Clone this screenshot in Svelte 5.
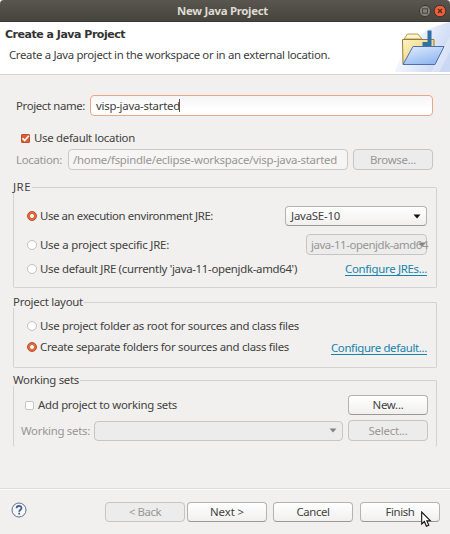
<script>
  // Spreads a label's letters so that it takes exactly w pixels.
  function fit(node, w) {
    node.style.letterSpacing = '0px';
    const natural = node.getBoundingClientRect().width;
    const n = node.textContent.length;
    node.style.letterSpacing = (w - natural) / n + 'px';
  }

  let project = 'visp-java-started';
</script>

{#snippet label(text, w)}<span class="t" use:fit={w}>{text}</span>{/snippet}
{#snippet arrow()}<svg class="arrow" width="8" height="5" viewBox="0 0 8 5"><path d="M0.5 .5h7L4 4.5z" fill="currentColor" /></svg>{/snippet}

<div class="window">
  <div class="titlebar">
    <b>{@render label('New Java Project', 91)}</b>
    <svg class="controls" width="28" height="14" viewBox="0 0 28 14">
      <circle cx="7" cy="7" r="5.6" fill="#83817a" stroke="#393832" />
      <rect x="4.5" y="4.8" width="5" height="4.4" fill="none" stroke="#45443f" />
      <circle cx="22" cy="7" r="5.8" fill="#ed6039" stroke="#45302a" />
      <path d="M20 5l4 4M24 5l-4 4" stroke="#51291d" stroke-width="1.2" />
    </svg>
  </div>

  <header>
    <h1>{@render label('Create a Java Project', 120)}</h1>
    <p>{@render label('Create a Java project in the workspace or in an external location.', 321)}</p>
    <svg class="banner" width="56" height="50" viewBox="0 0 56 50">
      <defs>
        <linearGradient id="glow" x1="0" y1="0" x2="1" y2=".5"><stop offset=".2" stop-color="#fff" /><stop offset="1" stop-color="#cbd8f3" /></linearGradient>
        <linearGradient id="front" x1="0" y1="0" x2=".6" y2="1"><stop offset="0" stop-color="#e2eefe" /><stop offset="1" stop-color="#93b8ee" /></linearGradient>
        <linearGradient id="back" x1="0" y1="0" x2="1" y2="1"><stop offset="0" stop-color="#fff3c0" /><stop offset="1" stop-color="#e8c668" /></linearGradient>
      </defs>
      <path d="M1 50C8 25 25 7 56 0V50z" fill="url(#glow)" />
      <path d="M37 50L56 14V30L45 50z" fill="#fff" opacity=".3" />
      <path d="M10 17l3.500-5H24l4 5z" fill="#fff5ca" stroke="#b39b58" />
      <path d="M8.500 17.500H40V40L9 42z" fill="url(#back)" stroke="#967a38" />
      <path d="M33.500 8.500h4v15.500H28.500v-4h5z" fill="#2e71a4" />
      <path d="M19 24.500H50L41 42.500H9z" fill="url(#front)" stroke="#4b70ad" />
    </svg>
  </header>

  <main>
    <div class="row name">
      {@render label('Project name:', 69)}
      <div class="field focus">{@render label(project, 84)}<i class="caret"></i></div>
    </div>
    <div class="row default">
      <span class="check on"><svg width="9" height="9" viewBox="0 0 9 9"><path d="M1.500 4.300l2.200 2.300L7.800 1.800" fill="none" stroke="#fff" stroke-width="1.600" /></svg></span>
      {@render label('Use default location', 101)}
    </div>
    <div class="row location off">
      {@render label('Location:', 46)}
      <div class="field">{@render label('/home/fspindle/eclipse-workspace/visp-java-started', 264)}</div>
      <div class="btn">{@render label('Browse...', 46)}</div>
    </div>

    <section class="jre">
      <div class="legend">{@render label('JRE', 18)}<i></i></div>
      <div class="box">
        <div class="row r1"><span class="radio on"></span>{@render label('Use an execution environment JRE:', 173)}
          <div class="btn combo push wide">{@render label('JavaSE-10', 49)}{@render arrow()}</div></div>
        <div class="row r2"><span class="radio"></span>{@render label('Use a project specific JRE:', 129)}
          <div class="btn combo push off narrow">{@render label('java-11-openjdk-amd64', 117)}{@render arrow()}</div></div>
        <div class="row r3"><span class="radio"></span>{@render label("Use default JRE (currently 'java-11-openjdk-amd64')", 257)}
          <span class="link push">{@render label('Configure JREs...', 82)}</span></div>
      </div>
    </section>

    <section class="layout">
      <div class="legend">{@render label('Project layout', 70)}<i></i></div>
      <div class="box">
        <div class="row r4"><span class="radio"></span>{@render label('Use project folder as root for sources and class files', 259)}</div>
        <div class="row r5"><span class="radio on"></span>{@render label('Create separate folders for sources and class files', 249)}
          <span class="link push low">{@render label('Configure default...', 96)}</span></div>
      </div>
    </section>

    <section class="sets">
      <div class="legend">{@render label('Working sets', 66)}<i></i></div>
      <div class="box open">
        <div class="row r6"><span class="check"></span>{@render label('Add project to working sets', 139)}
          <div class="btn push">{@render label('New...', 31)}</div></div>
        <div class="row r7 off">{@render label('Working sets:', 69)}
          <div class="btn combo sets-combo">{@render arrow()}</div>
          <div class="btn">{@render label('Select...', 39)}</div></div>
      </div>
    </section>
  </main>

  <footer>
    <svg class="help" width="16" height="16" viewBox="0 0 16 16">
      <circle cx="8" cy="8" r="7" fill="#f6f7f9" stroke="#5d6f91" />
      <path d="M5.600 6.200C5.600 3.300 10.500 3.300 10.500 6.100C10.500 7.700 8.200 7.800 8.200 9.700M8.200 10.800V12.500" fill="none" stroke="#48608a" stroke-width="1.800" />
    </svg>
    <div class="btn off">{@render label('< Back', 32)}</div>
    <div class="btn next">{@render label('Next >', 34)}</div>
    <div class="btn cancel">{@render label('Cancel', 33)}</div>
    <div class="btn finish">{@render label('Finish', 29)}</div>
  </footer>

  <svg class="cursor" width="11" height="17" viewBox="0 0 11 17">
    <path d="M.700 1v12l2.700-2.500 2 4.800 2.400-1-2-4.600H9.300z" fill="#fff" stroke="#111" stroke-width="1.100" />
  </svg>
</div>

<style>
  :global(body) { background: #f1f0ee; overflow: hidden; }
  .window {
    position: relative; width: 450px; height: 534px; overflow: hidden;
    display: flex; flex-direction: column; box-sizing: border-box;
    background: #f1f0ee; color: #424240;
    font: 11.4px/14px "Noto Sans", "Open Sans", sans-serif;
  }
  .window :global(*) { box-sizing: border-box; }
  .t { white-space: pre; flex: none; display: inline-block; }
  svg { display: block; flex: none; }

  .titlebar {
    height: 22px; flex: none; display: flex; align-items: center;
    padding: 0 4px 0 177px; justify-content: space-between;
    background: linear-gradient(#59564f, #45443d); border-bottom: 1px solid #3a3934;
    border-radius: 4px 4px 0 0; color: #dfdbd2;
  }
  .titlebar b { font-weight: 700; }

  header {
    position: relative; height: 53px; flex: none; background: #fff;
    border-bottom: 1px solid #d5d4d2; padding: 6px 0 0 5px;
  }
  h1 { margin: 0; font: bold 11px/14px "DejaVu Sans", sans-serif; color: #333; }
  p { margin: 6px 0 0 4px; color: #3d3d3d; }
  .banner { position: absolute; right: 0; top: 0; }

  main { height: 413px; flex: none; padding: 20px 13px 0; display: flex; flex-direction: column; }
  .row { display: flex; align-items: center; }
  .off { color: #979693; }
  .push { margin-left: auto; }

  .field {
    height: 21px; border: 1px solid #cac8c6; border-radius: 4px; background: #f6f5f4;
    padding: 0 0 0 5px; display: flex; align-items: center;
  }
  .focus { background: linear-gradient(#f5f5f5, #fff 70%); border-color: #eaa58b; width: 343px; color: #3c3c3c; }
  .caret { width: 1px; height: 13px; background: #555; margin-left: -1px; }
  .name { height: 21px; padding-left: 3px; }
  .name .field { margin-left: 5px; }
  .default { height: 14px; margin-top: 15px; padding-left: 8px; }
  .location { height: 21px; margin-top: 4px; padding-left: 3px; }
  .location .field { width: 280px; margin: 0 5px 0 6px; padding-left: 4px; }

  .check {
    width: 9px; height: 9px; flex: none; border-radius: 2px; margin-right: 4px;
    background: #fff; border: 1px solid #c6c4c1;
  }
  .check.on { background: #d95f35; border: 0; box-shadow: inset 0 0 0 1px #bd4f2d; }
  .radio {
    width: 10px; height: 10px; flex: none; border-radius: 50%; margin-right: 3px;
    background: #fff; border: 1px solid #c3c1be;
  }
  .radio.on { background: radial-gradient(circle, #fff 1.500px, #df6a40 2.300px); border-color: #b94a26; }

  .btn {
    height: 20px; width: 80px; flex: none; display: flex; align-items: center; justify-content: center;
    border: 1px solid #b5b3b0; border-bottom-color: #9b9996; border-radius: 4px;
    background: linear-gradient(#fff, #f1f0ef);
  }
  .off .btn, .btn.off { background: #edecec; border-color: #c6c5c3; height: 21px; }
  .combo { justify-content: space-between; padding: 0 5px; }
  .arrow { color: #111; }
  .off .arrow { color: #858482; }

  section { display: flex; flex-direction: column; flex: none; }
  .legend { height: 14px; display: flex; align-items: center; z-index: 1; }
  .legend i {
    flex: 1; height: 7px; margin: 7px 0 0 1px; border: 1px solid #d2d1cf;
    border-width: 1px 1px 0 0; border-radius: 0 2px 0 0;
  }
  .box {
    border: 1px solid #d4d3d1; border-top: 0; border-radius: 0 0 2px 2px;
    margin-top: -1px; display: flex; flex-direction: column; padding-right: 9px;
  }
  .link { color: #1683ac; height: 14px; border-bottom: 1px solid #1683ac; line-height: 13px; }

  .jre { margin-top: 10px; }
  .jre .box { height: 95px; padding-left: 13px; padding-top: 13px; }
  .r1 { height: 20px; }
  .wide { width: 142px; }
  .r2 { height: 21px; margin-top: 8px; }
  .narrow { width: 121px; padding: 0 0 0 4px; }
  .narrow .arrow { margin-left: -14px; }
  .r3 { height: 14px; margin-top: 7px; }

  .layout { margin-top: 7px; }
  .layout .box { height: 60px; padding-left: 13px; padding-top: 11px; }
  .r4 { height: 14px; }
  .r5 { height: 14px; margin-top: 7px; }
  .low { margin-top: 2px; }

  .sets { margin-top: 5px; }
  .sets .box { height: 61px; padding-top: 9px; padding-left: 7px; }
  .sets .open { border-bottom: 0; padding-right: 8px; }
  .r6 { height: 20px; padding-left: 4px; }
  .r7 { height: 21px; margin-top: 5px; }
  .r7 .sets-combo { width: 249px; margin: 0 5px 0 4px; height: 20px; justify-content: flex-end; }

  footer {
    flex: 1; border-top: 1px solid #dedddb; box-shadow: inset 0 1px #fafaf9;
    display: flex; align-items: flex-start; padding: 13px 0 0 11px;
  }
  .help { margin: 0 78px 0 0; }
  footer .btn.off { height: 20px; }
  .next { margin-left: 2px; }
  .cancel { margin-left: 6px; }
  .finish { margin-left: 7px; }
  .cursor { position: absolute; left: 421px; top: 511px; }
</style>
